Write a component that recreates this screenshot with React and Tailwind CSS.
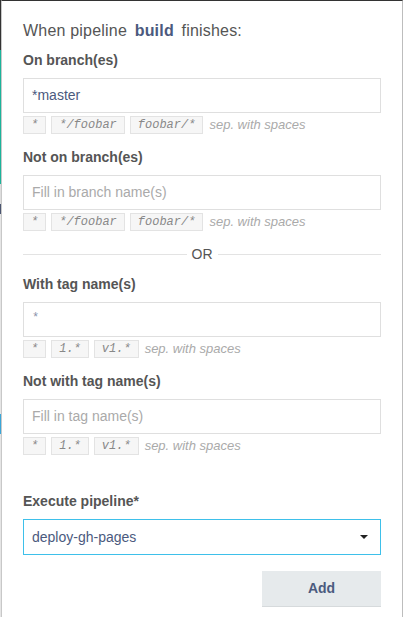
import React from "react";

const F = { fontFamily: '"Liberation Sans", Arial, sans-serif' };

function Hints({ items }) {
  return (
    <div className="flex items-center gap-[5px] mt-[3px] h-[18px]">
      {items.map((t) => (
        <span
          key={t}
          className="h-[18px] px-[7px] flex items-center border border-[#e3e3e3] bg-[#f6f6f6] text-[12px] italic text-[#888] leading-none font-['Liberation_Mono',_'Courier_New',_monospace]"
        >
          {t}
        </span>
      ))}
      <span className="text-[13px] italic text-[#aaa] ml-px">sep. with spaces</span>
    </div>
  );
}

function Label({ children, className = "" }) {
  return <div className={"text-[14px] font-bold text-[#555] leading-[16px] " + className}>{children}</div>;
}

function Input({ value, placeholder, mono }) {
  return (
    <div className="h-[35px] mt-[10px] border border-[#dfdfdf] bg-white flex items-center px-[8px]">
      {value ? (
        mono ? (
          <span className="text-[12px] text-[#8a93ab] -mt-[4px] font-['Liberation_Mono',_'Courier_New',_monospace]">{value}</span>
        ) : (
          <span className="text-[14px] text-[#4b5a7e]">{value}</span>
        )
      ) : (
        <span className="text-[14px] text-[#aaa]">{placeholder}</span>
      )}
    </div>
  );
}

export default function App() {
  return (
    <div style={F} className="w-[403px] h-[617px] bg-white relative overflow-hidden flex">
      <div className="w-px h-full flex flex-col shrink-0">
        <div className="h-[50px] bg-[#333]" />
        <div className="h-[134px] bg-[#1bb39a]" />
        <div className="h-[20px] bg-[#ddd]" />
        <div className="h-[10px] bg-[#4a5570]" />
        <div className="h-[200px] bg-[#e5e5e5]" />
        <div className="h-[20px] bg-[#3aa6d8]" />
        <div className="flex-1 bg-[#e5e5e5]" />
      </div>
      <div className="flex-1 border-l border-[#c8c8c8] border-r border-r-[#bdbdbd] border-t border-t-[#333] bg-white">
        <div className="pl-[21px] pr-[19px] pt-[20px] mr-[2px]">
          <div className="text-[16px] text-[#555] leading-[19px] tracking-[0.2px]">
            When pipeline <span className="font-bold text-[#4b5a7e] px-[3px]">build</span> finishes:
          </div>

          <Label className="mt-[12px]">On branch(es)</Label>
          <Input value="*master" />
          <Hints items={["*", "*/foobar", "foobar/*"]} />

          <Label className="mt-[15px]">Not on branch(es)</Label>
          <Input placeholder="Fill in branch name(s)" />
          <Hints items={["*", "*/foobar", "foobar/*"]} />

          <div className="flex items-center mt-[14px] h-[18px]">
            <div className="flex-1 h-px bg-[#e3e3e3]" />
            <span className="px-[5px] text-[14px] text-[#555]">OR</span>
            <div className="flex-1 h-px bg-[#e3e3e3]" />
          </div>

          <Label className="mt-[13px]">With tag name(s)</Label>
          <Input value="*" mono />
          <Hints items={["*", "1.*", "v1.*"]} />

          <Label className="mt-[15px]">Not with tag name(s)</Label>
          <Input placeholder="Fill in tag name(s)" />
          <Hints items={["*", "1.*", "v1.*"]} />

          <Label className="mt-[38px]">Execute pipeline*</Label>
          <div className="h-[36px] mt-[10px] border border-[#3ec0ea] bg-white flex items-center px-[8px] justify-between">
            <span className="text-[14px] text-[#4b5a7e]">deploy-gh-pages</span>
            <svg width="8" height="5" viewBox="0 0 8 5" className="mr-[4px]">
              <path d="M0 0 H8 L4 4 Z" fill="#222" />
            </svg>
          </div>

          <div className="flex justify-end mt-[16px]">
            <button className="w-[119px] h-[36px] bg-[#e6eaec] border-b border-[#d6dadc] text-[14px] font-bold text-[#4b5a7e]">
              Add
            </button>
          </div>
        </div>
      </div>
    </div>
  );
}
